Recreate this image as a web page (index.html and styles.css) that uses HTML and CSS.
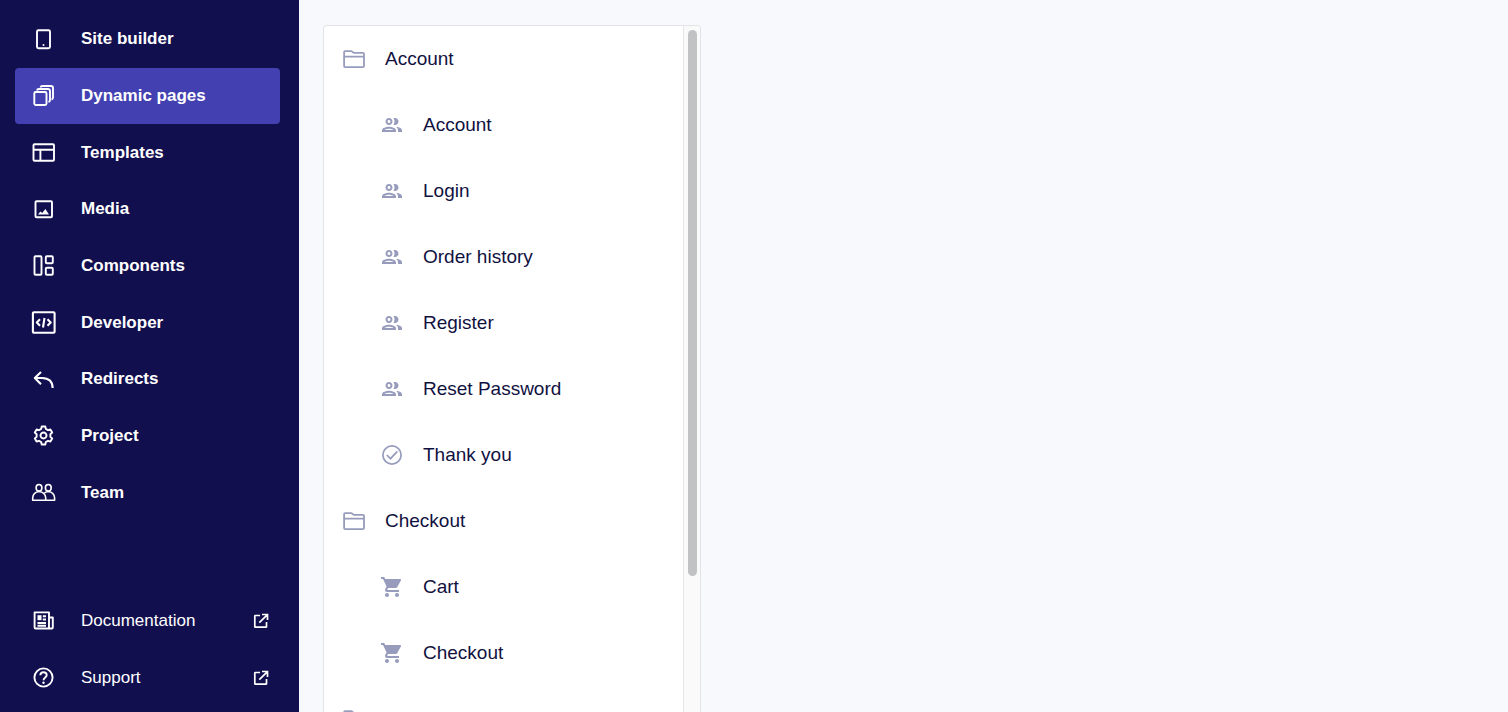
FILE: index.html
```html
<!DOCTYPE html>
<html lang="en">
<head>
<meta charset="utf-8">
<meta name="viewport" content="width=device-width, initial-scale=1">
<title>Dynamic pages</title>
<link rel="stylesheet" href="styles.css">
</head>
<body>
<svg class="sprite" aria-hidden="true">
  <symbol id="people" viewBox="0 0 24 24"><path fill="currentColor" d="M9 13.75c-2.34 0-7 1.17-7 3.5V19h14v-1.75c0-2.33-4.66-3.5-7-3.5zM4.34 17c.84-.58 2.87-1.25 4.66-1.25s3.82.67 4.66 1.25H4.34zM9 12c1.93 0 3.5-1.57 3.5-3.5S10.93 5 9 5 5.5 6.57 5.5 8.5 7.07 12 9 12zm0-5c.83 0 1.5.67 1.5 1.5S9.83 10 9 10s-1.5-.67-1.5-1.5S8.17 7 9 7zm7.04 6.81c1.16.84 1.96 1.96 1.96 3.44V19h4v-1.75c0-2.02-3.5-3.17-5.96-3.44zM15 12c1.93 0 3.5-1.57 3.5-3.5S16.93 5 15 5c-.54 0-1.04.13-1.5.35.63.89 1 1.98 1 3.15s-.37 2.26-1 3.15c.46.22.96.35 1.5.35z"/></symbol>
  <symbol id="folder" viewBox="0 0 24 24"><path fill="none" stroke="currentColor" stroke-width="1.8" stroke-linejoin="round" d="M2.1 19V5.2q0-1 1-1h6q.7 0 1.2.5l.7.6q.5.5 1.2.5h8.7q1.1 0 1.1 1.1V19q0 1.1-1.1 1.1H3.2q-1.1 0-1.1-1.1zM2.1 9.7h19.9"/></symbol>
  <symbol id="cart" viewBox="0 0 24 24"><path fill="currentColor" d="M7 18c-1.1 0-1.99.9-1.99 2S5.9 22 7 22s2-.9 2-2-.9-2-2-2zM1 2v2h2l3.6 7.59-1.35 2.45c-.16.28-.25.61-.25.96 0 1.1.9 2 2 2h12v-2H7.42c-.14 0-.25-.11-.25-.25l.03-.12.9-1.63h7.45c.75 0 1.41-.41 1.75-1.03l3.58-6.49c.08-.14.12-.31.12-.48 0-.55-.45-1-1-1H5.21l-.94-2H1zm16 16c-1.1 0-1.99.9-1.99 2s.89 2 1.99 2 2-.9 2-2-.9-2-2-2z"/></symbol>
  <symbol id="check" viewBox="0 0 24 24"><g fill="none" stroke="currentColor" stroke-width="1.7"><circle cx="12" cy="12" r="9.1"/><path d="M6.8 12l3.7 3.7 6.8-7.3"/></g></symbol>
  <symbol id="external" viewBox="0 0 16 16"><path fill="none" stroke="currentColor" stroke-width="1.7" d="M7 2.5H2.3q-.5 0-.5.5v10.7q0 .5.5.5h10.7q.5 0 .5-.5V9M9 1.5h5.5V7M14.2 1.8L6.3 9.7"/></symbol>
</svg>
<div class="app">
  <aside class="sidebar">
    <nav class="nav nav-main" aria-label="Main">
      <a class="nav-item" href="#"><svg class="nav-icon" viewBox="0 0 25 25"><rect x="6" y="3.2" width="13" height="18" rx="1.5"/><circle class="solid" cx="12.5" cy="18" r="1"/></svg><span>Site builder</span></a>
      <a class="nav-item active" href="#" aria-current="page"><svg class="nav-icon" viewBox="0 0 25 25"><rect x="3.3" y="9" width="12.2" height="13" rx="1.5"/><path d="M6 7.5Q6.2 6 8 6h9q2 0 2 2v9q0 1.5-1.5 2M9.5 4.5Q9.8 3 11.5 3H20q2 0 2 2v9.5q0 1.5-1.5 2"/></svg><span>Dynamic pages</span></a>
      <a class="nav-item" href="#"><svg class="nav-icon" viewBox="0 0 25 25"><rect x="2.5" y="4.3" width="20.5" height="16.5" rx="1"/><path d="M2.5 9.8H23M9.4 9.8v11"/></svg><span>Templates</span></a>
      <a class="nav-item" href="#"><svg class="nav-icon" viewBox="0 0 25 25"><rect x="4.5" y="4.3" width="16.5" height="16" rx="1"/><path class="solid" d="M7 17.5l2.4-3 1.8 1.5 3.2-4 3.6 5.500z"/></svg><span>Media</span></a>
      <a class="nav-item" href="#"><svg class="nav-icon" viewBox="0 0 25 25"><rect x="3.5" y="3.3" width="7" height="18.5" rx="1"/><rect x="14.8" y="3.3" width="7" height="7" rx="1"/><rect x="14.8" y="14.8" width="7" height="7" rx="1"/></svg><span>Components</span></a>
      <a class="nav-item" href="#"><svg class="nav-icon bold" viewBox="0 0 25 25"><rect x="1.9" y="2.2" width="21.7" height="20.5" rx="1"/><path d="M9 9.3L5.8 12.5 9 15.800M16.500 9.300l3.200 3.200-3.200 3.300M13.500 8l-1.500 9.500"/></svg><span>Developer</span></a>
      <a class="nav-item" href="#"><svg class="nav-icon bold" viewBox="0 0 25 25"><path d="M10 5L3.800 11l6.200 6.200M3.800 11H11q10.500.2 10.700 10"/></svg><span>Redirects</span></a>
      <a class="nav-item" href="#"><svg class="nav-icon" viewBox="0 0 25 25"><g transform="translate(12.5 12.5)"><path d="M-1.800-9H1.800L2.300-6.600 4.570-5.290 6.890-6.060 8.690-2.940 6.870-1.310V1.310L8.690 2.940 6.890 6.060 4.570 5.290 2.300 6.600 1.800 9H-1.800L-2.300 6.600-4.570 5.290-6.890 6.060-8.690 2.940-6.870 1.310V-1.310L-8.690-2.940-6.890-6.060-4.570-5.290-2.300-6.600z"/><circle r="3"/></g></svg><span>Project</span></a>
      <a class="nav-item" href="#"><svg class="nav-icon thin" viewBox="0 0 25 25"><ellipse cx="8" cy="7.8" rx="2.9" ry="3.3"/><ellipse cx="17.3" cy="7.8" rx="2.9" ry="3.3"/><path d="M1.7 20.300v-2.500q.5-5.600 6.300-6.300 6.200.7 6.700 6.300v2.500zM14.700 20.300h8.900v-2.500q-.5-5.600-6.300-6.300-2.700.2-4.500 2"/></svg><span>Team</span></a>
    </nav>
    <nav class="nav nav-help" aria-label="Help">
      <a class="nav-item" href="#"><svg class="nav-icon" viewBox="0 0 25 25"><path d="M18 20.500V4.400H3.600v15.100q0 1 1 1h16.200q1 0 1-1V9.500H18M6.500 15h8.500M6.500 17.800h8.500M11.800 8.200H15M11.800 11.500H15"/><path class="solid" d="M6.500 7.200h4v5h-4z"/></svg><span>Documentation</span><svg class="external" viewBox="0 0 16 16"><use href="#external"/></svg></a>
      <a class="nav-item" href="#"><svg class="nav-icon" viewBox="0 0 25 25"><circle cx="12.5" cy="12.5" r="9.1"/><path d="M9.300 10.200q.2-3 3.200-3 3.100 0 3.200 2.800 0 1.300-1.500 2.400-1.700 1.200-1.700 2.900"/><circle class="solid" cx="12.5" cy="17.700" r="1.200"/></svg><span>Support</span><svg class="external" viewBox="0 0 16 16"><use href="#external"/></svg></a>
    </nav>
  </aside>
  <main class="content">
    <section class="panel" aria-label="Pages">
      <div class="tree">
        <button class="row" type="button"><svg class="icon"><use href="#folder"/></svg>Account</button>
        <button class="row child" type="button"><svg class="icon"><use href="#people"/></svg>Account</button>
        <button class="row child" type="button"><svg class="icon"><use href="#people"/></svg>Login</button>
        <button class="row child" type="button"><svg class="icon"><use href="#people"/></svg>Order history</button>
        <button class="row child" type="button"><svg class="icon"><use href="#people"/></svg>Register</button>
        <button class="row child" type="button"><svg class="icon"><use href="#people"/></svg>Reset Password</button>
        <button class="row child" type="button"><svg class="icon"><use href="#check"/></svg>Thank you</button>
        <button class="row" type="button"><svg class="icon"><use href="#folder"/></svg>Checkout</button>
        <button class="row child" type="button"><svg class="icon"><use href="#cart"/></svg>Cart</button>
        <button class="row child" type="button"><svg class="icon"><use href="#cart"/></svg>Checkout</button>
        <button class="row" type="button" aria-label="Folder"><svg class="icon"><use href="#folder"/></svg></button>
      </div>
      <div class="track"><div class="thumb"></div></div>
    </section>
  </main>
</div>
</body>
</html>
```
FILE: styles.css
```css
* { box-sizing: border-box; }
body {
  margin: 0;
  font-family: "Liberation Sans", Arial, sans-serif;
  background: #f8f9fd;
  color: #11113f;
}
.sprite { display: none; }
.app { display: flex; height: 100vh; overflow: hidden; }

.sidebar {
  flex: 0 0 299px;
  display: flex;
  flex-direction: column;
  gap: 71px;
  padding: 11px 19px 6px 15px;
  background: #120f4f;
}
.nav { display: grid; grid-auto-rows: 57px; }
.nav-main { flex: 1; grid-auto-rows: 1fr; }
.nav-item {
  display: flex;
  align-items: center;
  gap: 25px;
  padding: 0 11px 0 16px;
  border-radius: 4px;
  color: #fff;
  font-size: 17px;
  text-decoration: none;
}
.nav-main .nav-item { font-weight: bold; }
.active { background: #4341b1; }
.nav-icon {
  width: 25px;
  height: 25px;
  fill: none;
  stroke: currentColor;
  stroke-width: 1.9;
  stroke-linejoin: round;
}
.bold { stroke-width: 2.1; }
.thin { stroke-width: 1.6; }
.solid { fill: currentColor; stroke: none; }
.external { width: 16px; height: 16px; margin-left: auto; }

.content { flex: 1; display: flex; padding: 25px 24px 0; }
.panel {
  flex: 0 0 378px;
  display: flex;
  overflow: hidden;
  border: 1px solid #e3e4e8;
  border-bottom: 0;
  border-radius: 4px 4px 0 0;
  background: #fff;
}
.tree { flex: 1; overflow: hidden; }
.row {
  display: flex;
  align-items: center;
  gap: 19px;
  width: 100%;
  height: 66px;
  padding: 0 18px;
  border: 0;
  background: none;
  color: inherit;
  font: inherit;
  font-size: 19px;
  text-align: left;
}
.child { padding-left: 56px; }
.icon { flex: none; width: 24px; height: 24px; color: #979cbc; }
.track {
  flex: 0 0 17px;
  padding: 4px 3px 0 4px;
  border-left: 1px solid #e6e6e8;
  background: #fafafa;
}
.thumb { height: 80%; border-radius: 5px; background: #c1c2c4; }
```
